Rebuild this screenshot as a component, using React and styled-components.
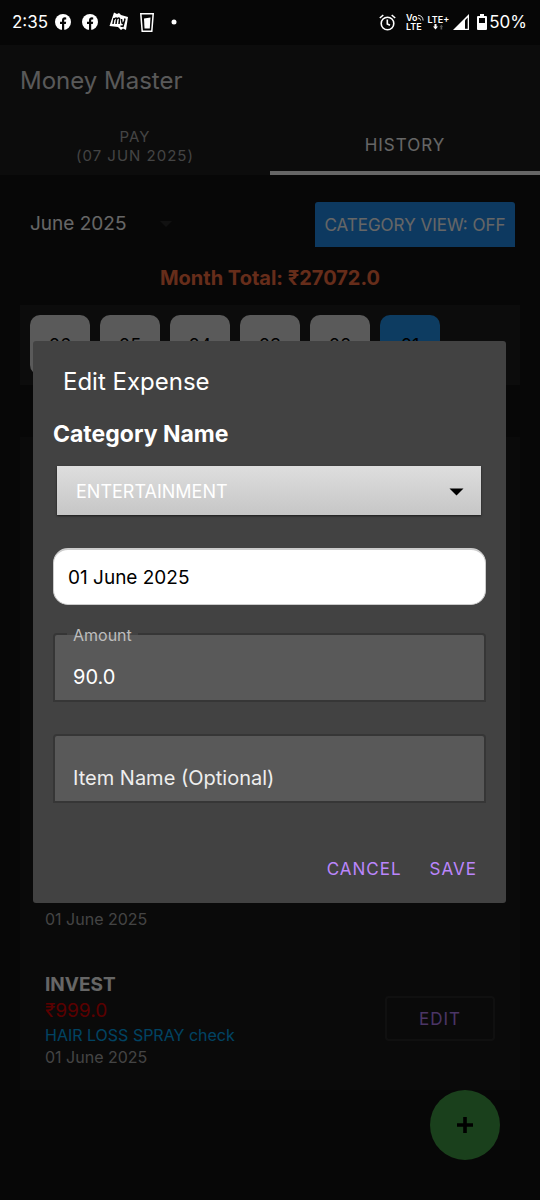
import React, { useState } from "react";
import styled, { createGlobalStyle } from "styled-components";

const GlobalStyle = createGlobalStyle`
  * { box-sizing: border-box; }
  body {
    margin: 0;
    background: #121212;
    color: #fff;
    font-family: Inter, "Noto Sans", sans-serif;
    font-size: 18px;
  }
  button, input, select { font: inherit; color: inherit; margin: 0; }
`;

const Screen = styled.div`
  min-height: 100vh;
  display: flex;
  flex-direction: column;
  background: #121212;
`;

const StatusBar = styled.header`
  position: sticky;
  top: 0;
  z-index: 3;
  height: 45px;
  padding: 0 13px 1px 12px;
  display: flex;
  align-items: center;
  justify-content: space-between;
  background: #060606;
`;

const StatusGroup = styled.div`
  display: flex;
  align-items: center;
  gap: ${(p) => p.$gap}px;
`;

const StatusText = styled.span`
  font-size: 17px;
  line-height: 20px;
`;

const NetworkLabel = styled.span`
  display: flex;
  flex-direction: column;
  align-items: ${(p) => (p.$center ? "center" : "flex-start")};
  font-size: 9px;
  font-weight: 600;
  line-height: 9px;
`;

const NetworkLine = styled.span`
  display: flex;
  align-items: center;
`;

const AppBar = styled.div`
  height: 70px;
  padding: 2px 20px 0;
  display: flex;
  align-items: center;
  background: #1e1e1e;
`;

const AppTitle = styled.h1`
  margin: 0;
  font-size: 24px;
  font-weight: 400;
  line-height: 30px;
  color: #dedede;
`;

const Tabs = styled.div`
  display: grid;
  grid-template-columns: 1fr 1fr;
  height: 60px;
  background: #1e1e1e;
`;

const Tab = styled.button`
  border: 0;
  border-bottom: 4px solid ${(p) => (p.$active ? "#fff" : "transparent")};
  padding: 5px 0 0;
  background: none;
  color: ${(p) => (p.$active ? "#fff" : "#aaa")};
  font-size: ${(p) => (p.$active ? 17 : 15)}px;
  line-height: 19px;
  letter-spacing: 1px;
  text-transform: uppercase;
`;

const Content = styled.main`
  padding: 27px 20px 110px;
  display: flex;
  flex-direction: column;
`;

const FilterRow = styled.div`
  display: flex;
  justify-content: space-between;
  align-items: center;
  padding: 0 5px 0 10px;
`;

const MonthButton = styled.button`
  display: flex;
  align-items: center;
  justify-content: space-between;
  width: 142px;
  padding: 0 0 2px;
  border: 0;
  background: none;
  font-size: 19px;
  line-height: 24px;
`;

const CategoryToggle = styled.button`
  width: 200px;
  height: 45px;
  border: 0;
  border-radius: 3px 3px 0 0;
  padding: 0;
  background: #218ff0;
  font-size: 17px;
`;

const MonthTotal = styled.p`
  margin: 18px 0 14px;
  text-align: center;
  font-size: 20px;
  line-height: 26px;
  font-weight: 700;
  color: #ff7043;
`;

const DayStrip = styled.div`
  display: flex;
  gap: 10px;
  padding: 10px;
  background: #1e1e1e;
`;

const DayChip = styled.button`
  width: 60px;
  height: 60px;
  border: 0;
  border-radius: 10px;
  padding: 0;
  background: ${(p) => (p.$active ? "#2196f3" : "#e0e0e0")};
  color: #000;
  font-size: 18px;
`;

const ExpenseList = styled.section`
  margin-top: 52px;
  min-height: 653px;
  display: flex;
  flex-direction: column;
  justify-content: flex-end;
  background: #191919;
`;

const ExpenseItem = styled.article`
  height: 138px;
  padding: 0 25px 22px 25px;
  display: flex;
  align-items: flex-end;
  justify-content: space-between;
`;

const ExpenseDetails = styled.div`
  display: flex;
  flex-direction: column;
`;

const ExpenseName = styled.h2`
  margin: 0;
  font-size: 19px;
  line-height: 26px;
  font-weight: 700;
`;

const ExpenseAmount = styled.span`
  font-size: 19px;
  line-height: 26px;
  color: #e00000;
`;

const ExpenseNote = styled.span`
  font-size: 16px;
  line-height: 22px;
  color: #03a9f4;
`;

const ExpenseDate = styled.time`
  font-size: 16px;
  line-height: 22px;
  color: #aaa;
`;

const EditButton = styled.button`
  width: 110px;
  height: 45px;
  margin-bottom: 27px;
  border: 2px solid #2a2a2a;
  border-radius: 4px;
  background: none;
  color: #bb86fc;
  font-size: 17px;
  letter-spacing: 1px;
`;

const AddButton = styled.button`
  position: fixed;
  right: 40px;
  bottom: 40px;
  width: 70px;
  height: 70px;
  padding: 0;
  border: 0;
  border-radius: 50%;
  display: grid;
  place-items: center;
  background: #43a047;
`;

const Scrim = styled.div`
  position: fixed;
  inset: 0;
  z-index: 2;
  padding: 43px 34px 0 33px;
  display: flex;
  align-items: center;
  background: rgba(0, 0, 0, 0.6);
`;

const Dialog = styled.form`
  width: 100%;
  padding: 25px 20px 12px;
  border-radius: 3px;
  background: #424242;
  display: flex;
  flex-direction: column;
`;

const DialogTitle = styled.h2`
  margin: 0 0 20px;
  padding-left: 10px;
  font-size: 24px;
  line-height: 32px;
  font-weight: 400;
`;

const FieldHeading = styled.label`
  font-size: 23px;
  line-height: 32px;
  font-weight: 700;
`;

const SelectBox = styled.div`
  position: relative;
  margin: 16px 5px 33px 4px;

  svg {
    position: absolute;
    right: 17px;
    top: 22px;
    pointer-events: none;
  }
`;

const Select = styled.select`
  appearance: none;
  display: block;
  width: 100%;
  height: 49px;
  padding: 2px 19px 0;
  border: 0;
  border-radius: 0;
  background: linear-gradient(#dedede, #c6c6c6);
  box-shadow: 0 1px 2px rgba(0, 0, 0, 0.6);
  font-size: 18px;
`;

const DateInput = styled.input`
  width: 100%;
  height: 57px;
  padding: 2px 14px 0;
  border: 1px solid #ccc;
  border-top-width: 2px;
  border-radius: 15px;
  background: #fff;
  color: #000;
  font-size: 19px;
`;

const OutlinedField = styled.div`
  position: relative;
  margin-top: ${(p) => p.$top}px;
`;

const FloatingLabel = styled.label`
  position: absolute;
  left: 14px;
  top: -6px;
  padding: 0 6px;
  background: linear-gradient(#424242 50%, #595959 50%);
  color: #bdbdbd;
  font-size: 16px;
  line-height: 16px;
`;

const OutlinedInput = styled.input`
  display: block;
  width: 100%;
  height: 69px;
  padding: 19px 18px 0;
  border: 2px solid #363636;
  border-radius: 4px 4px 0 0;
  background: #595959;
  font-size: 20px;

  &::placeholder { color: #eee; opacity: 1; }
`;

const Actions = styled.div`
  display: flex;
  justify-content: flex-end;
  gap: 10px;
  margin-top: 44px;
`;

const TextButton = styled.button`
  height: 44px;
  padding: 0 9px;
  border: 0;
  background: none;
  color: #bb86fc;
  font-size: 17px;
  letter-spacing: 1px;
  text-transform: uppercase;
`;

const FacebookIcon = () => (
  <svg width="16" height="16" viewBox="0 0 16 16" aria-hidden="true">
    <circle cx="8" cy="8" r="8" fill="#fff" />
    <path d="M7 16V10H5V7.700H7V6.300C7 4.200 8.300 3.300 9.800 3.300L11.200 3.400V5.400H10.200C9.400 5.400 9.200 5.800 9.200 6.500V7.700H11.200L10.800 10H9.200V16Z" fill="#060606" />
  </svg>
);

const MyIcon = () => (
  <svg width="20" height="20" viewBox="0 0 20 20" aria-hidden="true">
    <path d="M5 0.500L8 2L10 1L12 3L19 5L17 18L14 16.500L12 18L9 15L0.500 14Z" fill="#fff" />
    <path d="M4 12L5 6M5 7.500C7 5 8 6 7.500 8L7 12M7.500 7.500C9.500 5 11 6 10.500 8L10 12M12.500 7L13 11C14 11.500 15 11 15.500 9L16 6.500M15.300 9.500L14 14.500L11.500 14" fill="none" stroke="#060606" strokeWidth="1.500" />
  </svg>
);

const GlassIcon = () => (
  <svg width="14" height="19" viewBox="0 0 14 19" aria-hidden="true">
    <path d="M0.800 0.800H13.200L11.800 18.200H2.200Z" fill="none" stroke="#fff" strokeWidth="1.500" />
    <path d="M4 5.500L10.500 4.500L9.800 15.500H4.500Z" fill="#fff" />
  </svg>
);

const DotIcon = () => (
  <svg width="6" height="6" viewBox="0 0 6 6" aria-hidden="true">
    <circle cx="3" cy="3" r="2.500" fill="#fff" />
  </svg>
);

const AlarmIcon = () => (
  <svg width="17" height="17" viewBox="0 0 17 17" fill="none" stroke="#fff" strokeWidth="1.600" aria-hidden="true">
    <circle cx="8.500" cy="9.500" r="6.300" />
    <path d="M8.300 5.500V10L11 11.300M0.800 4L4.300 1M12.700 1L16.200 4" />
  </svg>
);

const WaveIcon = () => (
  <svg width="6" height="7" viewBox="0 0 7 7" fill="none" stroke="#fff" aria-hidden="true">
    <path d="M0 1Q5.500 1 6 7M0 4Q2.800 4 3 7" />
  </svg>
);

const DataArrowsIcon = () => (
  <svg width="10" height="6" viewBox="0 0 10 6" aria-hidden="true">
    <path d="M1.500 0H3.500V2.500H5L2.500 5.500L0 2.500H1.500Z" fill="#fff" />
    <path d="M7.500 5.500V3H6.500L8.500 0.500L10 3H9.200V5.500Z" fill="#555" />
  </svg>
);

const SignalIcon = () => (
  <svg width="16" height="16" viewBox="0 0 16 16" aria-hidden="true">
    <path d="M0 16L16 0V16Z" fill="#fff" />
    <path d="M12 6.200L14.700 3.500V14.700H12Z" fill="#060606" />
  </svg>
);

const BatteryIcon = () => (
  <svg width="10" height="16" viewBox="0 0 10 16" aria-hidden="true">
    <path d="M3 0H7V2H9Q10 2 10 3V15Q10 16 9 16H1Q0 16 0 15V3Q0 2 1 2H3Z" fill="#fff" />
    <path d="M2 4H8V9H2Z" fill="#060606" />
  </svg>
);

const CaretIcon = ({ color, width }) => (
  <svg width={width} height="8" viewBox="0 0 14 8" aria-hidden="true">
    <path d="M0 0.500H14L7 7.500Z" fill={color} />
  </svg>
);

const PlusIcon = () => (
  <svg width="18" height="18" viewBox="0 0 18 18" aria-hidden="true">
    <path d="M9 1V17M1 9H17" stroke="#000" strokeWidth="3.600" />
  </svg>
);

const DAYS = ["06", "05", "04", "03", "02", "01"];

const EXPENSES = [
  { id: 1, date: "01 June 2025" },
  { id: 2, name: "INVEST", amount: "₹999.0", note: "HAIR LOSS SPRAY check", date: "01 June 2025" },
];

export default function App() {
  const [date, setDate] = useState("01 June 2025");
  const [amount, setAmount] = useState("90.0");
  const [itemName, setItemName] = useState("");

  return (
    <Screen>
      <GlobalStyle />
      <StatusBar>
        <StatusGroup $gap={7}>
          <StatusText>2:35</StatusText>
          <StatusGroup $gap={11}>
            <FacebookIcon />
            <FacebookIcon />
            <MyIcon />
            <StatusGroup $gap={17}>
              <GlassIcon />
              <DotIcon />
            </StatusGroup>
          </StatusGroup>
        </StatusGroup>
        <StatusGroup $gap={8}>
          <StatusGroup $gap={10}>
            <AlarmIcon />
            <StatusGroup $gap={4}>
              <NetworkLabel>
                <NetworkLine>Vo<WaveIcon /></NetworkLine>
                <NetworkLine>LTE</NetworkLine>
              </NetworkLabel>
              <NetworkLabel $center>
                LTE+
                <DataArrowsIcon />
              </NetworkLabel>
              <SignalIcon />
            </StatusGroup>
          </StatusGroup>
          <StatusGroup $gap={2}>
            <BatteryIcon />
            <StatusText>50%</StatusText>
          </StatusGroup>
        </StatusGroup>
      </StatusBar>

      <AppBar>
        <AppTitle>Money Master</AppTitle>
      </AppBar>
      <Tabs>
        <Tab>Pay<br />(07 Jun 2025)</Tab>
        <Tab $active>History</Tab>
      </Tabs>

      <Content>
        <FilterRow>
          <MonthButton>
            June 2025
            <CaretIcon color="#2c2c2c" width={12} />
          </MonthButton>
          <CategoryToggle>CATEGORY VIEW: OFF</CategoryToggle>
        </FilterRow>
        <MonthTotal>Month Total: ₹27072.0</MonthTotal>
        <DayStrip>
          {DAYS.map((day) => (
            <DayChip key={day} $active={day === "01"}>{day}</DayChip>
          ))}
        </DayStrip>
        <ExpenseList>
          {EXPENSES.map((item) => (
            <ExpenseItem key={item.id}>
              <ExpenseDetails>
                {item.name && <ExpenseName>{item.name}</ExpenseName>}
                {item.amount && <ExpenseAmount>{item.amount}</ExpenseAmount>}
                {item.note && <ExpenseNote>{item.note}</ExpenseNote>}
                <ExpenseDate>{item.date}</ExpenseDate>
              </ExpenseDetails>
              {item.name && <EditButton>EDIT</EditButton>}
            </ExpenseItem>
          ))}
        </ExpenseList>
      </Content>
      <AddButton aria-label="Add expense"><PlusIcon /></AddButton>

      <Scrim>
        <Dialog role="dialog" aria-labelledby="dialog-title" onSubmit={(e) => e.preventDefault()}>
          <DialogTitle id="dialog-title">Edit Expense</DialogTitle>
          <FieldHeading htmlFor="category">Category Name</FieldHeading>
          <SelectBox>
            <Select id="category" defaultValue="ENTERTAINMENT">
              <option>ENTERTAINMENT</option>
              <option>INVEST</option>
            </Select>
            <CaretIcon color="#000" width={15} />
          </SelectBox>
          <DateInput aria-label="Date" value={date} onChange={(e) => setDate(e.target.value)} />
          <OutlinedField $top={28}>
            <OutlinedInput id="amount" value={amount} onChange={(e) => setAmount(e.target.value)} />
            <FloatingLabel htmlFor="amount">Amount</FloatingLabel>
          </OutlinedField>
          <OutlinedField $top={32}>
            <OutlinedInput
              aria-label="Item Name (Optional)"
              placeholder="Item Name (Optional)"
              value={itemName}
              onChange={(e) => setItemName(e.target.value)}
            />
          </OutlinedField>
          <Actions>
            <TextButton type="button">Cancel</TextButton>
            <TextButton type="submit">Save</TextButton>
          </Actions>
        </Dialog>
      </Scrim>
    </Screen>
  );
}
